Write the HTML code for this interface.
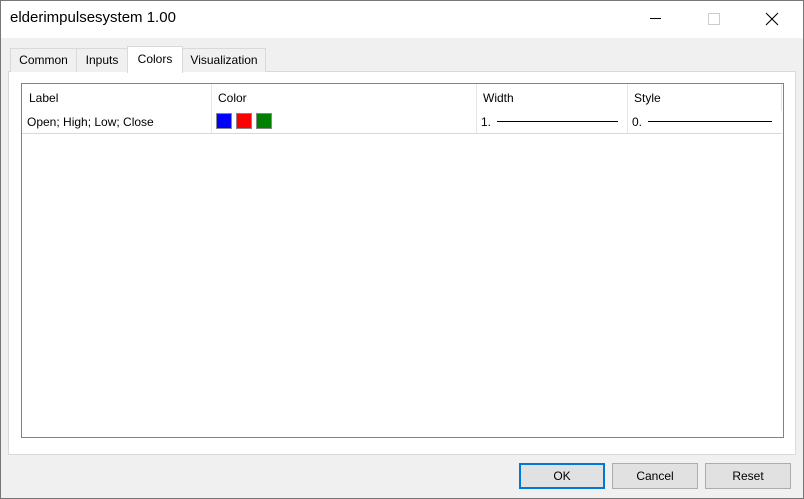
<!DOCTYPE html>
<html><head><style>
*{margin:0;padding:0;box-sizing:border-box}
body{width:804px;height:499px;overflow:hidden;background:#fff;font-family:"Liberation Sans",sans-serif;font-size:12px;color:#000;position:relative}
.win{position:absolute;left:0;top:0;width:804px;height:499px;background:#f0f0f0}
.frame{position:absolute;left:0;top:0;width:804px;height:499px;border:1px solid #777;pointer-events:none}
.title{position:absolute;left:0;top:0;width:804px;height:38px;background:#fff}
.title span{position:absolute;left:10px;top:9px;font-size:15px}
.a{position:absolute}
.tab{position:absolute;top:48px;height:24px;border:1px solid #d9d9d9;border-bottom:none;background:#f0f0f0;text-align:center;line-height:23px}
.btn{position:absolute;top:463px;width:86px;height:26px;border:1px solid #adadad;background:#e1e1e1;text-align:center;line-height:24px}
</style></head><body>
<div class="win">
<div class="title"><span>elderimpulsesystem 1.00</span>
<div class="a" style="left:650px;top:18px;width:11px;height:1px;background:#000"></div>
<div class="a" style="left:708px;top:13px;width:12px;height:12px;border:1px solid #ccc"></div>
<svg class="a" style="left:765px;top:12px" width="14" height="14"><path d="M1 1L13 13M13 1L1 13" stroke="#000" stroke-width="1.1"/></svg>
</div>
<div class="a" style="left:8px;top:71px;width:788px;height:384px;background:#fff;border:1px solid #d9d9d9"></div>
<div class="tab" style="left:10px;width:67px">Common</div>
<div class="tab" style="left:76px;width:52px">Inputs</div>
<div class="tab" style="left:127px;width:56px;top:46px;height:27px;background:#fff;line-height:24px">Colors</div>
<div class="tab" style="left:182px;width:84px">Visualization</div>
<div class="a" style="left:21px;top:83px;width:763px;height:355px;background:#fff;border:1px solid #828282"></div>
<div class="a" style="left:22px;top:133px;width:760px;height:1px;background:#d9d9d9"></div>
<div class="a" style="left:211px;top:84px;width:1px;height:49px;background:#e5e5e5"></div>
<div class="a" style="left:476px;top:84px;width:1px;height:49px;background:#e5e5e5"></div>
<div class="a" style="left:627px;top:84px;width:1px;height:49px;background:#e5e5e5"></div>
<div class="a" style="left:781px;top:84px;width:1px;height:27px;background:#e5e5e5"></div>
<div class="a" style="left:29px;top:91px">Label</div>
<div class="a" style="left:218px;top:91px">Color</div>
<div class="a" style="left:483px;top:91px">Width</div>
<div class="a" style="left:634px;top:91px">Style</div>
<div class="a" style="left:27px;top:115px">Open; High; Low; Close</div>
<div class="a" style="left:216px;top:113px;width:16px;height:16px;background:#00f;border:1px solid #888"></div>
<div class="a" style="left:236px;top:113px;width:16px;height:16px;background:#f00;border:1px solid #888"></div>
<div class="a" style="left:256px;top:113px;width:16px;height:16px;background:#008000;border:1px solid #888"></div>
<div class="a" style="left:481px;top:115px">1.</div>
<div class="a" style="left:497px;top:121px;width:121px;height:1px;background:#000"></div>
<div class="a" style="left:632px;top:115px">0.</div>
<div class="a" style="left:648px;top:121px;width:124px;height:1px;background:#000"></div>
<div class="btn" style="left:519px;border:2px solid #0078d7;line-height:22px">OK</div>
<div class="btn" style="left:612px">Cancel</div>
<div class="btn" style="left:705px">Reset</div>
</div>
<div class="frame"></div>
</body></html>
